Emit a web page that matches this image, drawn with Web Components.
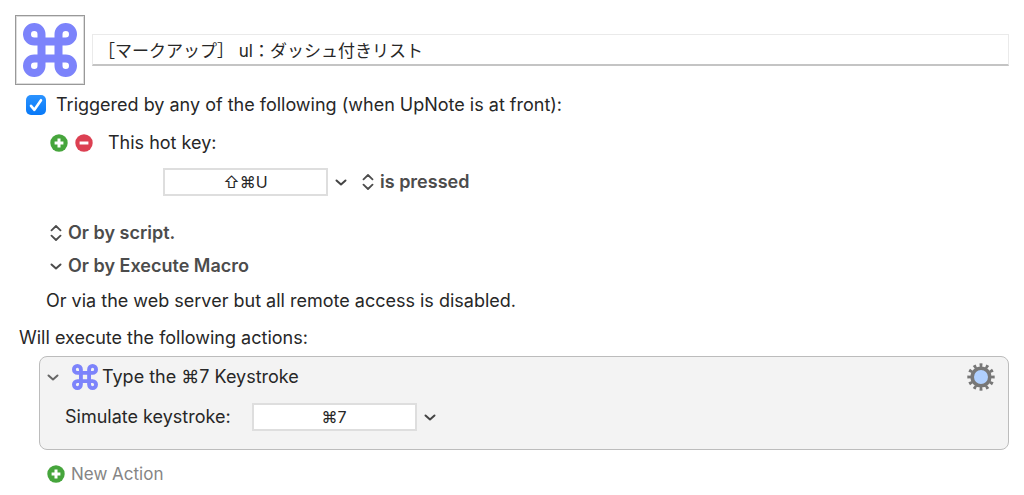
<!DOCTYPE html>
<html lang="en">
<head>
<meta charset="utf-8">
<title>Macro Editor</title>
<style>
    body {
        margin: 0;
        background: #fff;
        color: #272727;
        font: 18px/24px Inter, "Noto Sans CJK JP", "DejaVu Sans", sans-serif;
    }
</style>
</head>
<body>
<macro-editor></macro-editor>

<script>
const resetStyles = `
    * { box-sizing: border-box; }
    button, input, select {
        margin: 0;
        padding: 0;
        border: 0;
        background: none;
        color: inherit;
        font: inherit;
    }
    button, select { appearance: none; cursor: pointer; }
    svg { display: block; }
`;

class BaseElement extends HTMLElement {
    constructor() {
        super();
        this.attachShadow({mode: 'open'});
    }
    connectedCallback() {
        const template = document.createElement("template");
        template.innerHTML = `<style>${resetStyles}${this.getStyles()}</style>${this.getTemplate()}`;
        this.shadowRoot.replaceChildren(template.content.cloneNode(true));
    }
}

const icons = {
    command: `<svg viewBox="0 0 54 54" fill="none" stroke="#7c83fb" stroke-width="8">
        <path d="M18.5 18.5H11.25A7.25 7.25 0 1 1 18.5 11.25V42.75A7.25 7.25 0 1 1 11.25 35.5H42.75A7.25 7.25 0 1 1 35.5 42.75V11.25A7.25 7.25 0 1 1 42.75 18.5Z"/></svg>`,
    plus: `<svg viewBox="0 0 18 18"><circle cx="9" cy="9" r="8.7" fill="#46a53c"/>
        <path d="M9 4.6v8.8M4.6 9h8.8" stroke="#fff" stroke-width="3"/></svg>`,
    minus: `<svg viewBox="0 0 18 18"><circle cx="9" cy="9" r="8.7" fill="#dc4052"/>
        <path d="M4.6 9h8.8" stroke="#fff" stroke-width="3"/></svg>`,
    down: `<svg viewBox="0 0 12 16" fill="none" stroke="currentColor" stroke-width="2" stroke-linecap="round" stroke-linejoin="round">
        <path d="M1.5 6.5L6 10.5L10.5 6.5"/></svg>`,
    updown: `<svg viewBox="0 0 12 16" fill="none" stroke="currentColor" stroke-width="1.8" stroke-linecap="round" stroke-linejoin="round">
        <path d="M1.5 5.3L6 1L10.5 5.3M1.5 10.7L6 15L10.5 10.7"/></svg>`,
    gear: `<svg viewBox="0 0 28 28"><circle cx="14" cy="14" r="11.8" fill="none" stroke="#777" stroke-width="3.8"
        pathLength="120" stroke-dasharray="4.6 5.4" stroke-dashoffset="2.3"/>
        <circle cx="14" cy="14" r="8.8" fill="#b0d0ff" stroke="#777" stroke-width="3.6"/></svg>`,
    check: `<svg viewBox="0 0 20 20" fill="none" stroke="#fff" stroke-width="2.6" stroke-linecap="round" stroke-linejoin="round">
        <path d="M5 10.8L8.4 14.8L15 5.2"/></svg>`
};

class MacroIcon extends BaseElement {
    getTemplate() {
        return icons[this.getAttribute("name")];
    }
    getStyles() {
        return `
            :host { display: block; flex: none; width: var(--icon-size, 18px); }
        `;
    }
}
customElements.define("macro-icon", MacroIcon);

class IconButton extends BaseElement {
    getTemplate() {
        return `<button type="button" aria-label="${this.getAttribute("label")}">
            <macro-icon name="${this.getAttribute("icon")}"></macro-icon></button>`;
    }
    getStyles() {
        return `
            :host { display: block; flex: none; }
            button { display: block; }
        `;
    }
}
customElements.define("icon-button", IconButton);

// chevron followed by a bold label, opens a menu
class MenuButton extends BaseElement {
    getTemplate() {
        return `<button type="button">
            <macro-icon name="${this.getAttribute("icon")}"></macro-icon><slot></slot></button>`;
    }
    getStyles() {
        return `
            :host { display: block; color: #4c4c4c; --icon-size: 12px; }
            button { display: flex; align-items: center; gap: 6px; font-weight: 600; }
        `;
    }
}
customElements.define("menu-button", MenuButton);

// takes either a visible caption or a label for screen readers only
class KeyField extends BaseElement {
    getTemplate() {
        const caption = this.getAttribute("caption");
        return `
            ${caption ? `<label for="key">${caption}</label>` : ""}
            <input id="key" type="text" ${caption ? "" : `aria-label="${this.getAttribute("label")}"`} value="${this.getAttribute("value")}">
            <icon-button icon="down" label="Key options"></icon-button>
        `;
    }
    getStyles() {
        return `
            :host { display: flex; align-items: center; --icon-size: 12px; }
            label { margin-right: 21px; }
            input {
                width: 165px;
                height: 28px;
                border: 2px solid #dedede;
                background: #fff;
                text-align: center;
                font-size: 16px;
            }
            icon-button { margin-left: 7px; color: #444; }
        `;
    }
}
customElements.define("key-field", KeyField);

class MacroHeader extends BaseElement {
    getTemplate() {
        return `
            <button type="button" aria-label="Macro icon"><macro-icon name="command"></macro-icon></button>
            <input type="text" aria-label="Macro name" value="［マークアップ］ ul：ダッシュ付きリスト">
        `;
    }
    getStyles() {
        return `
            :host { display: flex; align-items: center; gap: 7px; }
            button { padding: 7px; border: 1px solid #999; outline: 1px solid #ddd; outline-offset: -2px; --icon-size: 54px; }
            input {
                flex: 1;
                min-width: 0;
                height: 32px;
                padding: 0 5px;
                border: 1px solid #eaeaea;
                border-bottom: 2px solid #c4c4c4;
                font-size: 17px;
            }
        `;
    }
}
customElements.define("macro-header", MacroHeader);

class CheckLine extends BaseElement {
    getTemplate() {
        return `<label><span class="box"><input type="checkbox" checked>
            <macro-icon name="check"></macro-icon></span><slot></slot></label>`;
    }
    getStyles() {
        return `
            :host { display: block; --icon-size: 20px; }
            label { display: flex; align-items: center; gap: 10px; }
            .box { display: grid; }
            .box > * { grid-area: 1 / 1; }
            input {
                appearance: none;
                width: 20px;
                height: 20px;
                border-radius: 5px;
                background: linear-gradient(#2b93ff, #0879f8);
            }
            input:not(:checked) + macro-icon { visibility: hidden; }
            macro-icon { pointer-events: none; }
        `;
    }
}
customElements.define("check-line", CheckLine);

class TriggerList extends BaseElement {
    getTemplate() {
        return `
            <div class="row enable">
                <check-line>Triggered by any of the following (when UpNote is at front):</check-line>
            </div>
            <div class="row hotkey">
                <icon-button icon="plus" label="Add trigger"></icon-button>
                <icon-button icon="minus" label="Remove trigger"></icon-button>
                <span>This hot key:</span>
            </div>
            <div class="row press">
                <key-field label="Hot key" value="⇧⌘U"></key-field>
                <label class="mode"><macro-icon name="updown"></macro-icon>
                    <select aria-label="Hot key mode"><option>is pressed</option><option>is released</option></select>
                </label>
            </div>
            <div class="row menu"><menu-button icon="updown">Or by script.</menu-button></div>
            <div class="row menu"><menu-button icon="down">Or by Execute Macro</menu-button></div>
            <div class="row note">Or via the web server but all remote access is disabled.</div>
        `;
    }
    getStyles() {
        return `
            :host { display: block; }
            .row { display: flex; align-items: center; min-height: 36px; }
            .enable { min-height: 40px; padding-left: 11px; }
            .hotkey { padding-left: 35px; gap: 7px; }
            .hotkey span { margin-left: 8px; }
            .press { min-height: 42px; padding-left: 148px; gap: 15px; margin-bottom: 13px; }
            .mode { display: flex; align-items: center; gap: 6px; color: #4c4c4c; --icon-size: 12px; }
            .mode select { font-weight: 600; }
            .menu { min-height: 33px; padding-left: 35px; }
            .note { min-height: 38px; padding-left: 31px; }
        `;
    }
}
customElements.define("trigger-list", TriggerList);

class ActionCard extends BaseElement {
    getTemplate() {
        return `
            <header>
                <icon-button class="toggle" icon="down" label="Collapse action"></icon-button>
                <macro-icon name="command"></macro-icon>
                <span class="title">${this.getAttribute("heading")}</span>
                <icon-button class="gear" icon="gear" label="Action options"></icon-button>
            </header>
            <div class="body"><slot></slot></div>
        `;
    }
    getStyles() {
        return `
            :host {
                display: block;
                padding-bottom: 12px;
                border: 1px solid #bcbcbc;
                border-radius: 8px;
                background: #f3f3f3;
            }
            header { display: flex; align-items: center; height: 40px; padding: 0 13px 0 7px; --icon-size: 26px; }
            .toggle { margin-right: 13px; color: #666; --icon-size: 12px; }
            .gear { --icon-size: 28px; }
            .title { flex: 1; margin-left: 4px; }
            .body { display: flex; align-items: center; min-height: 40px; padding-left: 25px; }
        `;
    }
}
customElements.define("action-card", ActionCard);

class MacroEditor extends BaseElement {
    getTemplate() {
        return `
            <macro-header></macro-header>
            <trigger-list></trigger-list>
            <div class="heading">Will execute the following actions:</div>
            <action-card heading="Type the ⌘7 Keystroke">
                <key-field caption="Simulate keystroke:" value="⌘7"></key-field>
            </action-card>
            <button class="new" type="button"><macro-icon name="plus"></macro-icon>New Action</button>
        `;
    }
    getStyles() {
        return `
            :host { display: block; padding: 15px 15px 0; }
            .heading { display: flex; align-items: center; min-height: 36px; padding-left: 4px; }
            action-card { margin-left: 24px; }
            .new { display: flex; align-items: center; gap: 6px; height: 36px; margin: 6px 0 0 32px; color: #858585; font-size: 17px; }
        `;
    }
}
customElements.define("macro-editor", MacroEditor);
</script>
</body>
</html>
